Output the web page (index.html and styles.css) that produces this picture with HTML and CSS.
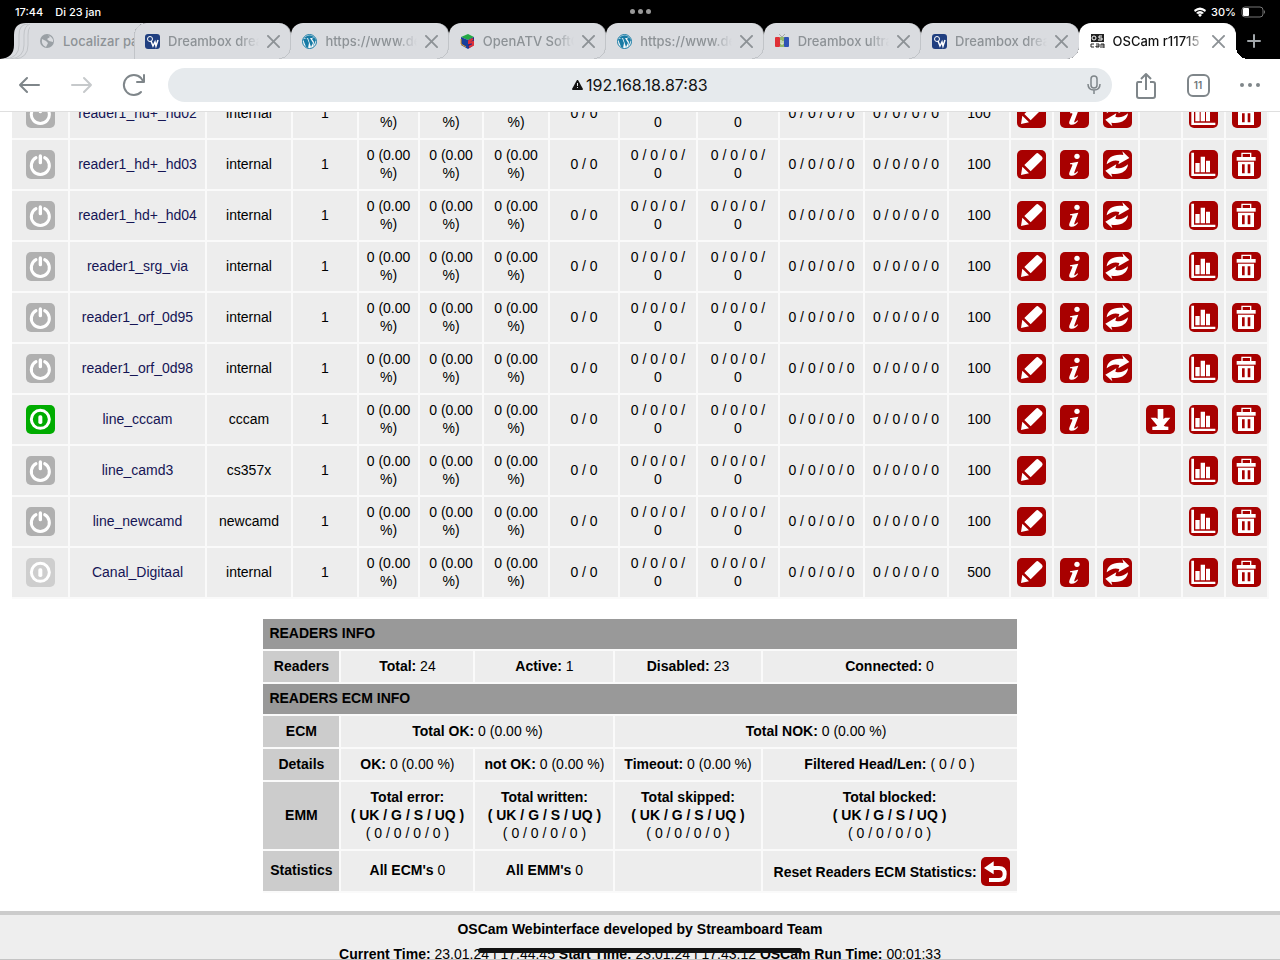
FILE: index.html
```html
<!DOCTYPE html>
<html lang="en">
<head>
<meta charset="utf-8">
<meta name="viewport" content="width=device-width, initial-scale=1">
<title>OSCam r11715</title>
<link rel="stylesheet" href="styles.css">
</head>
<body>
<svg class="sprite" aria-hidden="true">
  <symbol id="off" viewBox="0 0 87 87"><path d="M30 23A27 27 0 1 0 56 23" fill="none" stroke="#fff" stroke-width="9" stroke-linecap="round"/><path d="M43 18V38" stroke="#fff" stroke-width="10" stroke-linecap="round"/></symbol>
  <symbol id="on" viewBox="0 0 87 87"><circle cx="43" cy="43" r="27" fill="none" stroke="#fff" stroke-width="9"/><rect x="37" y="31" width="12" height="26" rx="5" fill="#fff"/></symbol>
  <symbol id="edit" viewBox="0 0 87 87"><path d="M57 11Q61 7 65 11L75 20Q79 24 75 30L41 64L22 45ZM16 50L36 70L12 75Z" fill="#fff"/></symbol>
  <symbol id="info" viewBox="0 0 87 87"><circle cx="51" cy="19" r="8" fill="#fff"/><path d="M30 40L55 35L43 67C42 72 46 71 52 64L54 66C49 74 41 78 33 77C26 76 27 70 29 65L37 46C38 42 34 43 30 43Z" fill="#fff"/></symbol>
  <symbol id="sync" viewBox="0 0 87 87"><path id="arrow" d="M58 4L79 24L46 43L49 33C36 29 24 32 11 43C13 22 32 11 61 15Z" fill="#fff"/><use href="#arrow" transform="rotate(180 43 43)"/></symbol>
  <symbol id="load" viewBox="0 0 87 87"><path d="M35 12H52V42L58 38H73L53 62Q56 65 67 65V75H19V65Q31 65 34 62L14 38H29L35 42Z" fill="#fff"/></symbol>
  <symbol id="stats" viewBox="0 0 87 87"><path d="M7 8H15V71H79V78H7ZM19 39H32V67H19ZM35 20H48V67H35ZM51 32H63V67H51Z" fill="#fff"/></symbol>
  <symbol id="trash" viewBox="0 0 87 87"><path d="M30 21V10H56V21" fill="none" stroke="#fff" stroke-width="4"/><path d="M14 21H71V32H14Z" fill="#fff"/><path fill-rule="evenodd" d="M18 35H66V78H18ZM30 43V70H38V43ZM47 43V70H55V43Z" fill="#fff"/></symbol>
  <symbol id="undo" viewBox="0 0 87 87"><path d="M9 33L38 13V52Z" fill="#fff"/><path d="M34 33H54Q71 33 71 51Q71 69 54 69H24" fill="none" stroke="#fff" stroke-width="12"/></symbol>
  <symbol id="close" viewBox="0 0 14 14"><path d="M1 1L13 13M13 1L1 13" stroke="#8d9296" stroke-width="2" stroke-linecap="round"/></symbol>
  <symbol id="ow" viewBox="0 0 15 15"><rect width="15" height="15" rx="3" fill="#203f80"/><circle cx="5" cy="5" r="2.500" fill="none" stroke="#fff"/><path d="M6 7L8 12L10 8L11 12L13 6" fill="none" stroke="#fff" stroke-width="1.500"/></symbol>
  <symbol id="wp" viewBox="0 0 15 15"><circle cx="7.500" cy="7.500" r="7" fill="#f5f8fa" stroke="#187ba5"/><path d="M1 5L4 13L6 14L7 9L5 4ZM6 4L9 13L11 9L8 4ZM11 13L14 6L12 3L10 5L12 8Z" fill="#187ba5"/><path d="M2 4Q7 -1 12 3L10 4H2Z" fill="#187ba5"/></symbol>
</svg>

<header class="browser">
  <div class="status">
    <div class="status-left"><span>17:44</span><span>Di 23 jan</span></div>
    <div class="dots"><i></i><i></i><i></i></div>
    <div class="status-right">
      <svg width="12" height="10" viewBox="0 0 12 10"><path d="M0 3Q6 -2 12 3L11 5Q6 1 1 5Z M2 6Q6 2 10 6L8 7Q6 6 4 7Z M4 8Q6 6 8 8L6 10Z" fill="#fff"/></svg>
      <span>30%</span>
      <svg width="25" height="12" viewBox="0 0 25 12"><rect x="1" y="1" width="21" height="10" rx="3" fill="none" stroke="#777"/><rect x="2" y="2" width="6" height="8" rx="1" fill="#fff"/><path d="M23 4Q25 6 23 8Z" fill="#777"/></svg>
    </div>
  </div>

  <nav class="tabs" aria-label="Tabs">
    <div class="tab-stack">
      <svg width="30" height="36" viewBox="0 0 30 36"><path d="M0 36Q14 35 14 22V12Q14 0 26 0H30V36Z" fill="#dadce0"/><path d="M5 36Q19 35 19 22V12Q19 1 28 1M10 36Q24 35 24 22V12Q24 3 30 1M15 36Q28 35 28 22V12Q28 6 30 4" fill="none" stroke="#c1c4c8"/></svg>
      <div class="tab-first">
        <svg width="15" height="15" viewBox="0 0 15 15"><circle cx="7" cy="7" r="7" fill="#9aa0a5"/><path d="M2 5L6 7L8 9L6 13Q1 11 2 5ZM8 1L10 3L7 5L9 7L13 8Q14 4 8 1Z" fill="#dadce0"/></svg>
        <span class="tab-title plain">Localizar pa</span>
      </div>
    </div>
    <div class="tab joined"><svg width="15" height="15"><use href="#ow"/></svg><span class="tab-title">Dreambox dreambox</span><button aria-label="Close tab"><svg width="13" height="13"><use href="#close"/></svg></button></div>
    <div class="tab"><svg width="15" height="15"><use href="#wp"/></svg><span class="tab-title">https://www.dedi</span><button aria-label="Close tab"><svg width="13" height="13"><use href="#close"/></svg></button></div>
    <div class="tab"><svg width="15" height="15" viewBox="0 0 15 15"><path d="M1 3L8 0L14 3L8 6Z" fill="#24a944"/><path d="M1 3L8 6V15L1 11Z" fill="#173f9b"/><path d="M8 6L14 3V11L8 15Z" fill="#202b87"/><path d="M13 5L9 7V9L13 8V11L9 13" fill="none" stroke="#df3038" stroke-width="2"/><path d="M1 5V10L6 13" fill="none" stroke="#e69b22" stroke-width="1"/></svg><span class="tab-title">OpenATV SoftCam</span><button aria-label="Close tab"><svg width="13" height="13"><use href="#close"/></svg></button></div>
    <div class="tab"><svg width="15" height="15"><use href="#wp"/></svg><span class="tab-title">https://www.dedi</span><button aria-label="Close tab"><svg width="13" height="13"><use href="#close"/></svg></button></div>
    <div class="tab"><svg width="15" height="15" viewBox="0 0 15 15"><rect y="3" width="5" height="10" rx="1" fill="#df3036"/><rect x="5" y="3" width="5" height="10" fill="#93b76a"/><rect x="9" y="3" width="5" height="10" rx="1" fill="#3054b5"/><path d="M4 0L7 3L10 0" fill="none" stroke="#aaa"/><path d="M6 6V10H8V7" fill="none" stroke="#eee"/></svg><span class="tab-title">Dreambox ultra hd</span><button aria-label="Close tab"><svg width="13" height="13"><use href="#close"/></svg></button></div>
    <div class="tab last"><svg width="15" height="15"><use href="#ow"/></svg><span class="tab-title">Dreambox dreambox</span><button aria-label="Close tab"><svg width="13" height="13"><use href="#close"/></svg></button></div>
    <div class="tab active"><svg width="15" height="15" viewBox="0 0 15 15"><rect x="1" width="13" height="8" fill="#222"/><rect x="2" y="2" width="4" height="4" rx="2" fill="none" stroke="#fff"/><path d="M12 2H9V4H12V6H8" fill="none" stroke="#fff"/><path d="M4 10H1V13H4M6 10H9V13H6V12H9M11 14V10H13V14M13 10H14V14" fill="none" stroke="#222" stroke-width="1"/></svg><span class="tab-title">OSCam r11715 (b</span><button aria-label="Close tab"><svg width="13" height="13"><use href="#close"/></svg></button></div>
    <button class="new-tab" aria-label="New tab"><svg width="14" height="14" viewBox="0 0 14 14"><path d="M7 1V13M1 7H13" stroke="#a2a7ab" stroke-width="2" stroke-linecap="round"/></svg></button>
  </nav>

  <div class="toolbar">
    <button aria-label="Back"><svg width="22" height="20" viewBox="0 0 22 20"><path d="M20 10H1M8 3L1 10L8 17" fill="none" stroke="#7f868a" stroke-width="2" stroke-linecap="round" stroke-linejoin="round"/></svg></button>
    <button aria-label="Forward"><svg width="22" height="20" viewBox="0 0 22 20"><path d="M1 10H20M13 3L20 10L13 17" fill="none" stroke="#c6c9cb" stroke-width="2" stroke-linecap="round" stroke-linejoin="round"/></svg></button>
    <button aria-label="Reload"><svg width="24" height="24" viewBox="0 0 24 24"><path d="M19 19A10 10 0 1 1 19 5L21 8M22 2V9H15" fill="none" stroke="#7f868a" stroke-width="2" stroke-linecap="round" stroke-linejoin="round"/></svg></button>
    <div class="omnibox">
      <svg width="11" height="10" viewBox="0 0 11 10"><path d="M5 0H6L11 9Q11 10 10 10H1Q0 10 0 9Z" fill="#111"/><path d="M5 3H6V6H5ZM5 7H6V8H5Z" fill="#e6eaed"/></svg>
      <input type="text" aria-label="Address" value="192.168.18.87:83">
      <button class="mic" aria-label="Voice search"><svg width="14" height="20" viewBox="0 0 14 20"><rect x="4" y="1" width="6" height="12" rx="3" fill="none" stroke="#7f868a" stroke-width="1.500"/><path d="M1 9Q1 15 7 15Q13 15 13 9M7 15V19" fill="none" stroke="#7f868a" stroke-width="1.500"/></svg></button>
    </div>
    <button aria-label="Share"><svg width="22" height="28" viewBox="0 0 22 28"><path d="M7 11H3Q2 11 2 13V25Q2 27 4 27H18Q20 27 20 25V13Q20 11 18 11H15M11 19V3M6 8L11 3L16 8" fill="none" stroke="#7f868a" stroke-width="2" stroke-linejoin="round"/></svg></button>
    <button aria-label="Open tabs"><span class="count">11</span></button>
    <button aria-label="Menu"><svg width="22" height="6" viewBox="0 0 22 6"><circle cx="3" cy="3" r="2" fill="#7f868a"/><circle cx="11" cy="3" r="2" fill="#7f868a"/><circle cx="19" cy="3" r="2" fill="#7f868a"/></svg></button>
  </div>
</header>

<main class="page">
<div class="scrolled">
<table class="readers">
<colgroup><col class="w58"><col class="w137"><col class="w86"><col class="w66"><col class="w61"><col class="w64"><col class="w66"><col class="w70"><col class="w78"><col class="w82"><col class="w85"><col class="w84"><col class="w62"><col class="w43"><col class="w43"><col class="w43"><col class="w43"><col class="w43"><col class="w43"></colgroup>
<tbody>
<tr><td><a href="#" class="ic grey" aria-label="Enable"><svg><use href="#off"/></svg></a></td><td><a href="#">reader1_hd+_hd02</a></td><td>internal</td><td>1</td><td>0 (0.00<br>%)</td><td>0 (0.00<br>%)</td><td>0 (0.00<br>%)</td><td>0 / 0</td><td>0 / 0 / 0 /<br>0</td><td>0 / 0 / 0 /<br>0</td><td>0 / 0 / 0 / 0</td><td>0 / 0 / 0 / 0</td><td>100</td><td><a href="#" class="ic" aria-label="Edit"><svg><use href="#edit"/></svg></a></td><td><a href="#" class="ic" aria-label="Info"><svg><use href="#info"/></svg></a></td><td><a href="#" class="ic" aria-label="Refresh"><svg><use href="#sync"/></svg></a></td><td></td><td><a href="#" class="ic" aria-label="Statistics"><svg><use href="#stats"/></svg></a></td><td><a href="#" class="ic" aria-label="Delete"><svg><use href="#trash"/></svg></a></td></tr>
<tr><td><a href="#" class="ic grey" aria-label="Enable"><svg><use href="#off"/></svg></a></td><td><a href="#">reader1_hd+_hd03</a></td><td>internal</td><td>1</td><td>0 (0.00<br>%)</td><td>0 (0.00<br>%)</td><td>0 (0.00<br>%)</td><td>0 / 0</td><td>0 / 0 / 0 /<br>0</td><td>0 / 0 / 0 /<br>0</td><td>0 / 0 / 0 / 0</td><td>0 / 0 / 0 / 0</td><td>100</td><td><a href="#" class="ic" aria-label="Edit"><svg><use href="#edit"/></svg></a></td><td><a href="#" class="ic" aria-label="Info"><svg><use href="#info"/></svg></a></td><td><a href="#" class="ic" aria-label="Refresh"><svg><use href="#sync"/></svg></a></td><td></td><td><a href="#" class="ic" aria-label="Statistics"><svg><use href="#stats"/></svg></a></td><td><a href="#" class="ic" aria-label="Delete"><svg><use href="#trash"/></svg></a></td></tr>
<tr><td><a href="#" class="ic grey" aria-label="Enable"><svg><use href="#off"/></svg></a></td><td><a href="#">reader1_hd+_hd04</a></td><td>internal</td><td>1</td><td>0 (0.00<br>%)</td><td>0 (0.00<br>%)</td><td>0 (0.00<br>%)</td><td>0 / 0</td><td>0 / 0 / 0 /<br>0</td><td>0 / 0 / 0 /<br>0</td><td>0 / 0 / 0 / 0</td><td>0 / 0 / 0 / 0</td><td>100</td><td><a href="#" class="ic" aria-label="Edit"><svg><use href="#edit"/></svg></a></td><td><a href="#" class="ic" aria-label="Info"><svg><use href="#info"/></svg></a></td><td><a href="#" class="ic" aria-label="Refresh"><svg><use href="#sync"/></svg></a></td><td></td><td><a href="#" class="ic" aria-label="Statistics"><svg><use href="#stats"/></svg></a></td><td><a href="#" class="ic" aria-label="Delete"><svg><use href="#trash"/></svg></a></td></tr>
<tr><td><a href="#" class="ic grey" aria-label="Enable"><svg><use href="#off"/></svg></a></td><td><a href="#">reader1_srg_via</a></td><td>internal</td><td>1</td><td>0 (0.00<br>%)</td><td>0 (0.00<br>%)</td><td>0 (0.00<br>%)</td><td>0 / 0</td><td>0 / 0 / 0 /<br>0</td><td>0 / 0 / 0 /<br>0</td><td>0 / 0 / 0 / 0</td><td>0 / 0 / 0 / 0</td><td>100</td><td><a href="#" class="ic" aria-label="Edit"><svg><use href="#edit"/></svg></a></td><td><a href="#" class="ic" aria-label="Info"><svg><use href="#info"/></svg></a></td><td><a href="#" class="ic" aria-label="Refresh"><svg><use href="#sync"/></svg></a></td><td></td><td><a href="#" class="ic" aria-label="Statistics"><svg><use href="#stats"/></svg></a></td><td><a href="#" class="ic" aria-label="Delete"><svg><use href="#trash"/></svg></a></td></tr>
<tr><td><a href="#" class="ic grey" aria-label="Enable"><svg><use href="#off"/></svg></a></td><td><a href="#">reader1_orf_0d95</a></td><td>internal</td><td>1</td><td>0 (0.00<br>%)</td><td>0 (0.00<br>%)</td><td>0 (0.00<br>%)</td><td>0 / 0</td><td>0 / 0 / 0 /<br>0</td><td>0 / 0 / 0 /<br>0</td><td>0 / 0 / 0 / 0</td><td>0 / 0 / 0 / 0</td><td>100</td><td><a href="#" class="ic" aria-label="Edit"><svg><use href="#edit"/></svg></a></td><td><a href="#" class="ic" aria-label="Info"><svg><use href="#info"/></svg></a></td><td><a href="#" class="ic" aria-label="Refresh"><svg><use href="#sync"/></svg></a></td><td></td><td><a href="#" class="ic" aria-label="Statistics"><svg><use href="#stats"/></svg></a></td><td><a href="#" class="ic" aria-label="Delete"><svg><use href="#trash"/></svg></a></td></tr>
<tr><td><a href="#" class="ic grey" aria-label="Enable"><svg><use href="#off"/></svg></a></td><td><a href="#">reader1_orf_0d98</a></td><td>internal</td><td>1</td><td>0 (0.00<br>%)</td><td>0 (0.00<br>%)</td><td>0 (0.00<br>%)</td><td>0 / 0</td><td>0 / 0 / 0 /<br>0</td><td>0 / 0 / 0 /<br>0</td><td>0 / 0 / 0 / 0</td><td>0 / 0 / 0 / 0</td><td>100</td><td><a href="#" class="ic" aria-label="Edit"><svg><use href="#edit"/></svg></a></td><td><a href="#" class="ic" aria-label="Info"><svg><use href="#info"/></svg></a></td><td><a href="#" class="ic" aria-label="Refresh"><svg><use href="#sync"/></svg></a></td><td></td><td><a href="#" class="ic" aria-label="Statistics"><svg><use href="#stats"/></svg></a></td><td><a href="#" class="ic" aria-label="Delete"><svg><use href="#trash"/></svg></a></td></tr>
<tr><td><a href="#" class="ic green" aria-label="Disable"><svg><use href="#on"/></svg></a></td><td><a href="#">line_cccam</a></td><td>cccam</td><td>1</td><td>0 (0.00<br>%)</td><td>0 (0.00<br>%)</td><td>0 (0.00<br>%)</td><td>0 / 0</td><td>0 / 0 / 0 /<br>0</td><td>0 / 0 / 0 /<br>0</td><td>0 / 0 / 0 / 0</td><td>0 / 0 / 0 / 0</td><td>100</td><td><a href="#" class="ic" aria-label="Edit"><svg><use href="#edit"/></svg></a></td><td><a href="#" class="ic" aria-label="Info"><svg><use href="#info"/></svg></a></td><td></td><td><a href="#" class="ic" aria-label="Download"><svg><use href="#load"/></svg></a></td><td><a href="#" class="ic" aria-label="Statistics"><svg><use href="#stats"/></svg></a></td><td><a href="#" class="ic" aria-label="Delete"><svg><use href="#trash"/></svg></a></td></tr>
<tr><td><a href="#" class="ic grey" aria-label="Enable"><svg><use href="#off"/></svg></a></td><td><a href="#">line_camd3</a></td><td>cs357x</td><td>1</td><td>0 (0.00<br>%)</td><td>0 (0.00<br>%)</td><td>0 (0.00<br>%)</td><td>0 / 0</td><td>0 / 0 / 0 /<br>0</td><td>0 / 0 / 0 /<br>0</td><td>0 / 0 / 0 / 0</td><td>0 / 0 / 0 / 0</td><td>100</td><td><a href="#" class="ic" aria-label="Edit"><svg><use href="#edit"/></svg></a></td><td></td><td></td><td></td><td><a href="#" class="ic" aria-label="Statistics"><svg><use href="#stats"/></svg></a></td><td><a href="#" class="ic" aria-label="Delete"><svg><use href="#trash"/></svg></a></td></tr>
<tr><td><a href="#" class="ic grey" aria-label="Enable"><svg><use href="#off"/></svg></a></td><td><a href="#">line_newcamd</a></td><td>newcamd</td><td>1</td><td>0 (0.00<br>%)</td><td>0 (0.00<br>%)</td><td>0 (0.00<br>%)</td><td>0 / 0</td><td>0 / 0 / 0 /<br>0</td><td>0 / 0 / 0 /<br>0</td><td>0 / 0 / 0 / 0</td><td>0 / 0 / 0 / 0</td><td>100</td><td><a href="#" class="ic" aria-label="Edit"><svg><use href="#edit"/></svg></a></td><td></td><td></td><td></td><td><a href="#" class="ic" aria-label="Statistics"><svg><use href="#stats"/></svg></a></td><td><a href="#" class="ic" aria-label="Delete"><svg><use href="#trash"/></svg></a></td></tr>
<tr><td><a href="#" class="ic pale" aria-label="Disable"><svg><use href="#on"/></svg></a></td><td><a href="#">Canal_Digitaal</a></td><td>internal</td><td>1</td><td>0 (0.00<br>%)</td><td>0 (0.00<br>%)</td><td>0 (0.00<br>%)</td><td>0 / 0</td><td>0 / 0 / 0 /<br>0</td><td>0 / 0 / 0 /<br>0</td><td>0 / 0 / 0 / 0</td><td>0 / 0 / 0 / 0</td><td>500</td><td><a href="#" class="ic" aria-label="Edit"><svg><use href="#edit"/></svg></a></td><td><a href="#" class="ic" aria-label="Info"><svg><use href="#info"/></svg></a></td><td><a href="#" class="ic" aria-label="Refresh"><svg><use href="#sync"/></svg></a></td><td></td><td><a href="#" class="ic" aria-label="Statistics"><svg><use href="#stats"/></svg></a></td><td><a href="#" class="ic" aria-label="Delete"><svg><use href="#trash"/></svg></a></td></tr>
</tbody>
</table>

<table class="totals">
<colgroup><col class="w78"><col class="w134"><col class="w140"><col class="w147"><col class="w254"></colgroup>
<tbody>
<tr><th colspan="5" class="section">READERS INFO</th></tr>
<tr><th>Readers</th><td><b>Total:</b> 24</td><td><b>Active:</b> 1</td><td><b>Disabled:</b> 23</td><td><b>Connected:</b> 0</td></tr>
<tr><th colspan="5" class="section">READERS ECM INFO</th></tr>
<tr><th>ECM</th><td colspan="2"><b>Total OK:</b> 0 (0.00 %)</td><td colspan="2"><b>Total NOK:</b> 0 (0.00 %)</td></tr>
<tr><th>Details</th><td><b>OK:</b> 0 (0.00 %)</td><td><b>not OK:</b> 0 (0.00 %)</td><td><b>Timeout:</b> 0 (0.00 %)</td><td><b>Filtered Head/Len:</b> ( 0 / 0 )</td></tr>
<tr><th>EMM</th><td class="tall"><b>Total error:<br>( UK / G / S / UQ )</b><br>( 0 / 0 / 0 / 0 )</td><td class="tall"><b>Total written:<br>( UK / G / S / UQ )</b><br>( 0 / 0 / 0 / 0 )</td><td class="tall"><b>Total skipped:<br>( UK / G / S / UQ )</b><br>( 0 / 0 / 0 / 0 )</td><td class="tall"><b>Total blocked:<br>( UK / G / S / UQ )</b><br>( 0 / 0 / 0 / 0 )</td></tr>
<tr><th>Statistics</th><td><b>All ECM's</b> 0</td><td><b>All EMM's</b> 0</td><td></td><td class="icon-cell"><div class="reset"><b>Reset Readers ECM Statistics:</b><a href="#" class="ic" aria-label="Reset"><svg><use href="#undo"/></svg></a></div></td></tr>
</tbody>
</table>

<footer class="footer">
<p><b>OSCam Webinterface developed by Streamboard Team</b></p>
<p><b>Current Time:</b> 23.01.24 | 17:44:45 <b>Start Time:</b> 23.01.24 | 17:43:12 <b>OSCam Run Time:</b> 00:01:33</p>
</footer>
</div>
<div class="home-bar"></div>
</main>
</body>
</html>
```
FILE: styles.css
```css
* { box-sizing: border-box; }
body {
  margin: 0;
  height: 100vh;
  display: flex;
  flex-direction: column;
  overflow: hidden;
  background: #fff;
  color: #000;
  font: 14px/18px "Liberation Sans", Arial, sans-serif;
}
button { border: 0; padding: 0; background: none; font: inherit; display: flex; align-items: center; justify-content: center; }
a { color: #151555; text-decoration: none; }
.sprite { position: absolute; width: 0; height: 0; }

/* browser chrome */
.browser { flex: none; font-family: Inter, sans-serif; border-bottom: 1px solid #dfdfdf; }
.status {
  display: grid;
  grid-template-columns: 1fr auto 1fr;
  align-items: center;
  height: 23px;
  padding: 0 14px 0 15px;
  background: #000;
  color: #fff;
  font-size: 11px;
  font-weight: 500;
}
.status-left { display: flex; gap: 12px; }
.status-right { display: flex; gap: 5px; align-items: center; justify-content: flex-end; }
.dots { display: flex; gap: 3px; }
.dots i { width: 5px; height: 5px; border-radius: 50%; background: #999; }

.tabs { display: flex; height: 36px; background: #000; font-size: 13px; font-weight: 500; color: #8d9296; }
.tab-stack { flex: 0 0 134px; display: flex; min-width: 0; }
.tab-stack svg { flex: none; }
.tab-first { flex: 1; min-width: 0; display: flex; align-items: center; gap: 8px; padding-left: 10px; background: #dadce0; }
.tab {
  position: relative;
  z-index: 0;
  flex: 1;
  min-width: 0;
  display: flex;
  align-items: center;
  gap: 8px;
  padding: 0 10px 0 11px;
  background: #dadce0;
  border-right: 1px solid #c1c4c8;
  border-radius: 12px 12px 12px 0;
}
.tab::before {
  content: "";
  position: absolute;
  z-index: -1;
  right: -1px;
  bottom: 0;
  width: 12px;
  height: 12px;
  background: radial-gradient(circle at 0 0, transparent 11px, #c1c4c8 11px 12px, #dadce0 12px);
}
.tab.joined { box-shadow: inset 1px 0 #c1c4c8; border-bottom-left-radius: 0; }
.tab.joined::after { content: ""; position: absolute; z-index: -2; left: 0; top: 0; width: 12px; height: 12px; background: radial-gradient(circle at 12px 12px, transparent 12px, #dadce0 12px); }
.tab.last { border-right-color: #dadce0; }
.tab.last::before { background: radial-gradient(circle at 0 0, transparent 12px, #fff 12px); }
.tab.active { background: #fff; border-color: #fff; color: #111; border-radius: 12px 12px 0 0; }
.tab.active::before { right: -13px; background: radial-gradient(circle at 12px 0, transparent 12px, #fff 12px); }
.tab svg { flex: none; }
.tab-title {
  flex: 1;
  min-width: 0;
  overflow: hidden;
  white-space: nowrap;
  -webkit-mask-image: linear-gradient(90deg, #000 78%, transparent);
  mask-image: linear-gradient(90deg, #000 78%, transparent);
}
.tab-title.plain { -webkit-mask-image: none; mask-image: none; }
.new-tab { flex: 0 0 44px; padding-right: 8px; }

.toolbar { display: flex; align-items: center; gap: 16px; height: 52px; padding: 0 12px; }
.toolbar > button { flex: none; width: 36px; height: 36px; }
.omnibox {
  position: relative;
  flex: 1;
  height: 34px;
  display: flex;
  align-items: center;
  justify-content: center;
  gap: 3px;
  border-radius: 17px;
  background: #e6eaed;
}
.omnibox input { width: 122px; border: 0; padding: 0; background: none; color: #111; font: 16px/20px Inter, sans-serif; }
.mic { position: absolute; right: 11px; }
.count { width: 23px; height: 23px; border: 2px solid #7f868a; border-radius: 6px; color: #6f767a; font-size: 10px; font-weight: 600; line-height: 19px; }

/* web interface */
.page { position: relative; flex: 1; min-height: 0; overflow: hidden; border-bottom: 1px solid #c4c4c4; }
.scrolled { margin-top: -23px; }
table { table-layout: fixed; border-collapse: separate; border-spacing: 0; }
td, th { padding: 0 0 2px; text-align: center; white-space: nowrap; background: #ededed; border: solid #fafafa; border-width: 0 2px 2px 0; }
td:has(.ic) { padding: 0; }
.readers { width: calc(100% - 23px); margin: 0 11px 20px 12px; }
.readers td { height: 51px; }
.ic { display: block; width: 29px; height: 29px; margin: 0 auto; border-radius: 5px; background: #a80000; }
.ic svg { display: block; width: 29px; height: 29px; }
.grey { background: #b0b0b0; }
.pale { background: #cecece; }
.green { background: #00ac00; }

.totals { width: calc(59% - 2px); margin: 0 auto 18px; }
.totals td, .totals th { height: 33px; }
.totals tr > :last-child { border-right: 0; }
.totals th { background: #ccc; }
.totals .section { height: 32px; background: #999; text-align: left; padding-left: 6px; }
.totals .tall { height: 69px; }
.reset { display: flex; align-items: center; justify-content: flex-end; gap: 4px; padding: 6px 7px 5px 0; }
.reset .ic { margin: 0; }

.footer { border-top: 4px solid #ccc; background: #eee; padding: 5px 0; text-align: center; }
.footer p { margin: 0 0 7px; }
.home-bar { position: absolute; left: 50%; bottom: 6px; width: 324px; height: 5px; margin-left: -162px; border-radius: 3px; background: #111; }

.w43 { width: 43px; } .w58 { width: 58px; } .w61 { width: 61px; } .w62 { width: 62px; }
.w64 { width: 64px; } .w66 { width: 66px; } .w70 { width: 70px; } .w78 { width: 78px; }
.w82 { width: 82px; } .w84 { width: 84px; } .w85 { width: 85px; } .w86 { width: 86px; }
.w134 { width: 134px; } .w137 { width: 137px; } .w140 { width: 140px; } .w147 { width: 147px; } .w254 { width: 254px; }
```
